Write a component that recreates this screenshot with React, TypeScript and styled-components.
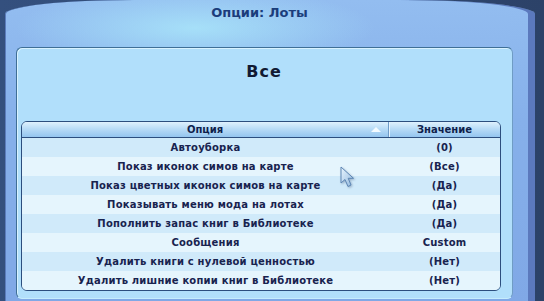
import React from 'react';
import styled, { createGlobalStyle } from 'styled-components';

const GlobalStyle = createGlobalStyle`
  html, body {
    margin: 0;
    padding: 0;
    background: #2e4468;
  }
  body {
    width: 544px;
    height: 301px;
    overflow: hidden;
    font-family: "DejaVu Sans", Verdana, sans-serif;
  }
`;

const Screen = styled.div`
  position: relative;
  display: flex;
  width: 544px;
  height: 301px;
  padding-left: 5px;
  box-sizing: border-box;
  background: linear-gradient(90deg, #34507e 0%, #2c4268 100%);
`;

const Window = styled.div`
  width: 530px;
  height: 301px;
  display: flex;
  flex-direction: column;
  box-sizing: border-box;
  padding: 0 22px 0 11px;
  border-radius: 130px 130px 0 0 / 14px 14px 0 0;
  background:
    radial-gradient(ellipse 180px 40px at 190px 28px, rgba(170, 230, 250, 0.85), rgba(170, 230, 250, 0) 100%),
    linear-gradient(180deg, #93bdf0 0%, #86b0ea 40%, #80a8e6 100%);
  box-shadow: inset -7px 0 0 #5b79bd, inset 1px 0 0 #5b7cbc;
`;

const TitleBar = styled.div`
  height: 47px;
  display: flex;
  justify-content: center;
  padding-top: 5px;
  box-sizing: border-box;
  padding-right: 10px;
`;

const Title = styled.h1`
  margin: 0;
  font-size: 13px;
  font-weight: bold;
  color: #1b3d7b;
`;

const Panel = styled.div`
  height: 252px;
  box-sizing: border-box;
  display: flex;
  flex-direction: column;
  padding: 0 11px 0 4px;
  background: #b1dffb;
  border: 1px solid #3f6f96;
  border-bottom-color: #c6ecfd;
  border-right-color: #6f9cc4;
  border-radius: 6px;
  box-shadow: inset 1px 1px 0 #d8f2ff;
`;

const Heading = styled.h2`
  margin: 0;
  height: 73px;
  display: flex;
  align-items: flex-start;
  justify-content: center;
  padding: 15px 0 0 6px;
  box-sizing: border-box;
  font-size: 16px;
  line-height: 17px;
  letter-spacing: 1px;
  font-weight: bold;
  color: #111a33;
`;

const Table = styled.div`
  width: 480px;
  box-sizing: border-box;
  border: 1px solid #2c4e7e;
  border-radius: 6px;
  overflow: hidden;
  background: #e4f4fd;
`;

const HeaderRow = styled.div`
  display: grid;
  grid-template-columns: 367px 1fr;
  height: 15px;
  background: linear-gradient(180deg, #dff1fd 0%, #b9dcf7 45%, #94c5ef 100%);
  border-bottom: 1px solid #2c4e7e;
`;

const HeaderCell = styled.div<{ $divider?: boolean }>`
  position: relative;
  display: flex;
  align-items: center;
  justify-content: center;
  font-size: 10px;
  font-weight: bold;
  color: #0f1f4c;
  border-right: ${({ $divider }) => ($divider ? '1px solid #6f9cc8' : 'none')};
  box-shadow: ${({ $divider }) => ($divider ? '1px 0 0 #e6f4ff' : 'none')};
`;

const SortArrow = styled.span`
  position: absolute;
  right: 7px;
  top: 5px;
  width: 0;
  height: 0;
  border-left: 5px solid transparent;
  border-right: 5px solid transparent;
  border-bottom: 5px solid #f4fbff;
`;

const Row = styled.div<{ $odd: boolean }>`
  display: grid;
  grid-template-columns: 367px 1fr;
  height: 19px;
  align-items: center;
  background: ${({ $odd }) => ($odd ? '#d0eafa' : '#e5f5fd')};
  font-size: 10px;
  font-weight: bold;
  color: #18234f;
  letter-spacing: 0.2px;
`;

const Cell = styled.div`
  text-align: center;
  white-space: nowrap;
`;

const Cursor = styled.svg`
  position: absolute;
  left: 340px;
  top: 166px;
  filter: drop-shadow(1px 1px 1px rgba(40, 60, 100, 0.35));
`;

const rows: [string, string][] = [
  ['Автоуборка', '(0)'],
  ['Показ иконок симов на карте', '(Все)'],
  ['Показ цветных иконок симов на карте', '(Да)'],
  ['Показывать меню мода на лотах', '(Да)'],
  ['Пополнить запас книг в Библиотеке', '(Да)'],
  ['Сообщения', 'Custom'],
  ['Удалить книги с нулевой ценностью', '(Нет)'],
  ['Удалить лишние копии книг в Библиотеке', '(Нет)'],
];

export default function App() {
  return (
    <>
      <GlobalStyle />
      <Screen>
        <Window>
          <TitleBar>
            <Title>Опции: Лоты</Title>
          </TitleBar>
          <Panel>
            <Heading>Все</Heading>
            <Table>
              <HeaderRow>
                <HeaderCell $divider>
                  Опция
                  <SortArrow />
                </HeaderCell>
                <HeaderCell>Значение</HeaderCell>
              </HeaderRow>
              {rows.map(([name, value], i) => (
                <Row key={name} $odd={i % 2 === 0}>
                  <Cell>{name}</Cell>
                  <Cell>{value}</Cell>
                </Row>
              ))}
            </Table>
          </Panel>
        </Window>
        <Cursor width="18" height="24" viewBox="0 0 18 24">
          <defs>
            <linearGradient id="cur" x1="0" y1="0" x2="1" y2="1">
              <stop offset="0" stopColor="#eaf6ff" />
              <stop offset="1" stopColor="#8fb6dc" />
            </linearGradient>
          </defs>
          <path
            d="M1 1 L1 17 L5 13.5 L8 20.5 L11 19 L8.2 12.3 L13.5 12.3 Z"
            fill="url(#cur)"
            stroke="#5d86b4"
            strokeWidth="1"
            strokeLinejoin="round"
          />
        </Cursor>
      </Screen>
    </>
  );
}
